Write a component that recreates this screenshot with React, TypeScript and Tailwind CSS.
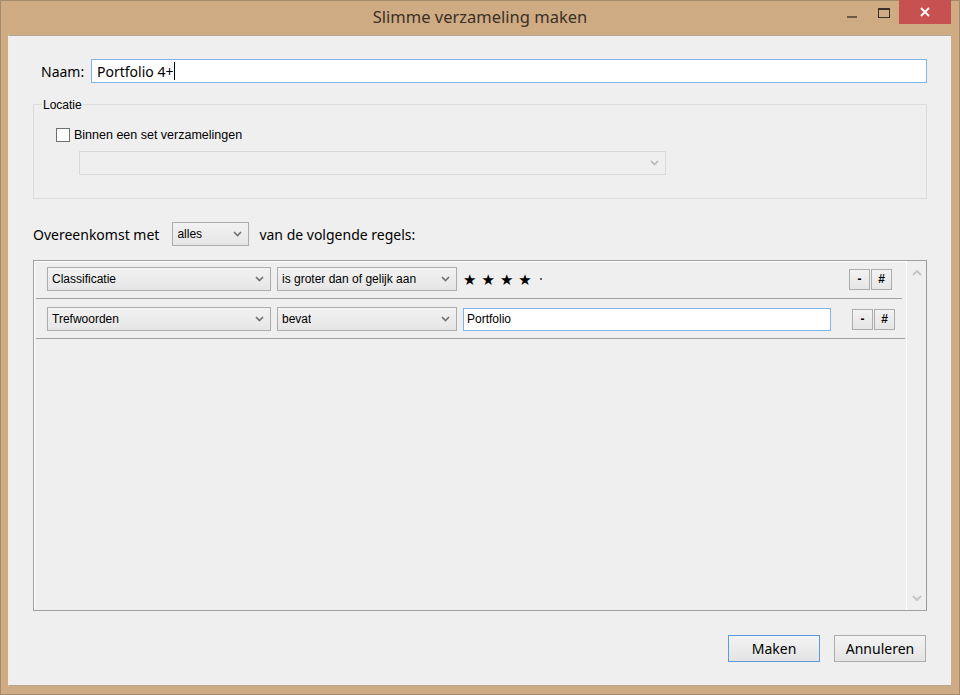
import type { ReactNode } from "react";

const ui = "font-['Liberation_Sans','DejaVu_Sans',sans-serif]";
const segoe = "font-['Noto_Sans','DejaVu_Sans',sans-serif]";

// klein pijltje zoals in de Windows-comboboxen
const chevron = (color: string) => (
  <svg width="9" height="6" viewBox="0 0 9 6" fill="none" stroke={color} strokeWidth="1.6">
    <path d="M1 1l3.5 3.5L8 1" />
  </svg>
);

function Select({ label, width, disabled }: { label?: string; width: string; disabled?: boolean }) {
  return (
    <div
      className={`${width} flex h-[24px] shrink-0 items-center justify-between border pl-[4px] pr-[6px] text-[12px] ${
        disabled
          ? "border-[#d9d9d9] bg-[#efefef]"
          : "border-[#acacac] bg-gradient-to-b from-[#f2f2f2] to-[#e6e6e6] text-black"
      }`}
    >
      <span className="truncate">{label}</span>
      {chevron(disabled ? "#b8b8b8" : "#707070")}
    </div>
  );
}

function SmallButton({ children }: { children: ReactNode }) {
  return (
    <div className="flex h-[21px] w-[21px] items-center justify-center border border-[#adadad] bg-gradient-to-b from-[#f2f2f2] to-[#e6e6e6] text-[12px] font-bold text-black">
      {children}
    </div>
  );
}

function RuleRow({ first, field, op, children }: { first?: boolean; field: string; op: string; children: ReactNode }) {
  return (
    <div
      className={`ml-[1px] flex items-center border-b border-[#a0a0a0] pl-[11px] pr-[10px] ${
        first ? "mr-[4px] pt-[5px] pb-[7px]" : "mr-[1px] pt-[8px] pb-[7px]"
      }`}
    >
      <Select label={field} width="w-[224px]" />
      <div className="w-[6px]" />
      <Select label={op} width="w-[180px]" />
      <div className="flex flex-1 items-center pl-[6px]">{children}</div>
      <div className="flex gap-[1px]">
        <SmallButton>-</SmallButton>
        <SmallButton>#</SmallButton>
      </div>
    </div>
  );
}

export default function App() {
  return (
    <div className={`${ui} flex h-[695px] w-[960px] flex-col border border-[#a48a6c] bg-[#cfab84]`}>
      {/* titelbalk */}
      <div className="relative flex h-[34px] shrink-0 items-center justify-center">
        <span className={`${segoe} pb-[1px] text-[16.5px] text-[#3a3026]`}>Slimme verzameling maken</span>
        <div className="absolute right-[8px] top-[-1px] flex items-start">
          <div className="mr-[21px] mt-[16px] h-[2px] w-[10px] bg-[#6b5a47]" />
          <div className="mr-[9px] mt-[8px] h-[10px] w-[12px] border border-t-2 border-[#3b3129]" />
          <div className="flex h-[24px] w-[52px] items-center justify-center bg-[#c75050]">
            <svg width="10" height="10" viewBox="0 0 10 10" stroke="white" strokeWidth="1.8">
              <path d="M1 1l8 8M9 1l-8 8" />
            </svg>
          </div>
        </div>
      </div>

      {/* venster-inhoud */}
      <div className="mb-[8px] ml-[7px] mr-[8px] flex flex-1 flex-col border-y border-l border-[#b7a58f] border-l-[#f3ece3] bg-[#efefef] pl-[24px] pr-[24px] text-black">
        <div className="mt-[23px] flex h-[24px] items-center pl-[8px]">
          <span className={`${segoe} w-[50px] text-[14px]`}>Naam:</span>
          <div className={`${segoe} flex h-[24px] flex-1 items-center border border-[#7eb4ea] bg-white pl-[5px] text-[14px]`}>
            Portfolio 4+
            <span className="ml-[1px] inline-block h-[18px] w-[1px] bg-black" />
          </div>
        </div>

        <div className="relative mt-[21px] h-[95px] border border-[#dcdcdc] pl-[22px] pt-[21px]">
          <span className="absolute -top-[9px] left-[8px] bg-[#efefef] px-[1px] text-[12px]">Locatie</span>
          <div className="flex items-center gap-[4px]">
            <div className="h-[14px] w-[14px] border border-[#707070] bg-white" />
            <span className="text-[12.5px]">Binnen een set verzamelingen</span>
          </div>
          <div className="mt-[6px] pl-[23px]">
            <Select width="w-[587px]" disabled />
          </div>
        </div>

        <div className={`${segoe} mt-[23px] flex h-[24px] items-center text-[14px]`}>
          <span>Overeenkomst met</span>
          <div className={`${ui} ml-[13px] mr-[10px]`}>
            <Select label="alles" width="w-[77px]" />
          </div>
          <span>van de volgende regels:</span>
        </div>

        <div className="mt-[14px] flex h-[351px] border border-[#a0a0a0] border-r-[#9a9a9a]">
          <div className="flex flex-1 flex-col border-l border-t border-white">
            <RuleRow first field="Classificatie" op="is groter dan of gelijk aan">
              <div className="flex items-center gap-[5px] text-[15px] leading-none">
                <span>★</span>
                <span>★</span>
                <span>★</span>
                <span>★</span>
                <span className="ml-[3px] h-[2px] w-[2px] bg-[#666]" />
              </div>
            </RuleRow>
            <RuleRow field="Trefwoorden" op="bevat">
              <div className="flex h-[23px] w-[368px] items-center border border-[#7eb4ea] bg-white pl-[3px] text-[12px]">
                Portfolio
              </div>
            </RuleRow>
          </div>
          <div className="flex w-[20px] flex-col items-center justify-between border-l border-white py-[8px]">
            <svg width="10" height="7" viewBox="0 0 10 7" fill="none" stroke="#c4c4c4" strokeWidth="1.8">
              <path d="M1 6l4-4 4 4" />
            </svg>
            <svg width="10" height="7" viewBox="0 0 10 7" fill="none" stroke="#c4c4c4" strokeWidth="1.8">
              <path d="M1 1l4 4 4-4" />
            </svg>
          </div>
        </div>

        <div className={`${segoe} mt-[24px] flex justify-end gap-[14px] pr-[1px] text-[14px]`}>
          <div className="flex h-[27px] w-[92px] items-center justify-center border border-[#5a9be0] bg-gradient-to-b from-[#f3f3f3] to-[#e4e4e4]">
            Maken
          </div>
          <div className="flex h-[27px] w-[92px] items-center justify-center border border-[#acacac] bg-gradient-to-b from-[#f3f3f3] to-[#e4e4e4]">
            Annuleren
          </div>
        </div>
      </div>
    </div>
  );
}
